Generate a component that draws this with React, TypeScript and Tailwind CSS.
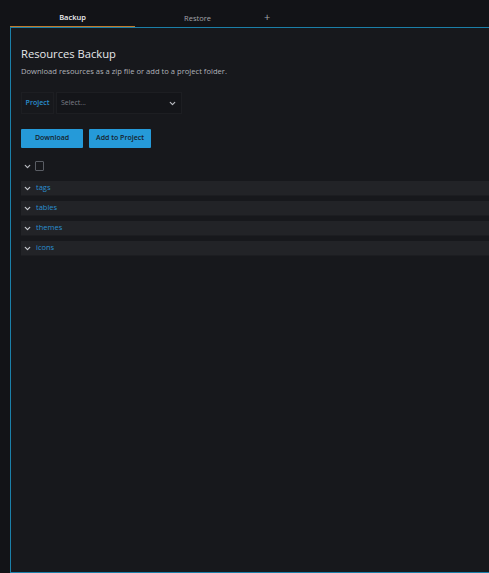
import { ChevronDown } from 'lucide-react'

const GROUPS = ['tags', 'tables', 'themes', 'icons']

function Chevron({ className = '' }: { className?: string }) {
  return <ChevronDown className={`h-[9px] w-[9px] ${className}`} strokeWidth={3.2} />
}

export default function App() {
  return (
    <div
      className="flex h-[573px] w-[489px] flex-col overflow-hidden bg-[#121317] text-[#c8cad0]"
      style={{ fontFamily: '"Open Sans", "Noto Sans", sans-serif' }}
    >
      {/* Tabs */}
      <div className="flex h-[27px] shrink-0 items-end pl-[10px]">
        <div className="flex h-[27px] w-[125px] items-end justify-center border-b border-[#c07a2c] pb-[3px] text-[7.5px] font-semibold text-[#eeeef0]">
          Backup
        </div>
        <div className="flex h-[27px] w-[125px] items-end justify-center pb-[3px] text-[7.5px] font-medium text-[#a2a4aa]">
          Restore
        </div>
        <div className="flex h-[27px] items-end pb-[2px] pl-[4px] text-[11px] text-[#a2a4aa]">+</div>
      </div>

      {/* Panel */}
      <div className="ml-[10px] flex flex-1 flex-col border-t border-b border-l border-[#1b7fa8] bg-[#17181c] pl-[10px] pt-[18px]">
        <h1 className="text-[11.2px] leading-[16px] text-[#e6e7ea]">Resources Backup</h1>
        <p className="mt-[3px] text-[7.6px] leading-[12px] text-[#b0b3b9]">
          Download resources as a zip file or add to a project folder.
        </p>

        <div className="mt-[15px] flex h-[22px] gap-[2px]">
          <div className="flex w-[33px] items-center justify-center border border-[#1d1e22] text-[7px] font-semibold text-[#2a8fd0]">
            Project
          </div>
          <div className="flex w-[126px] items-center justify-between border border-[#1d1e22] bg-[#141519] pl-[4px] pr-[4px] text-[7px] text-[#7c7f88]">
            <span>Select...</span>
            <Chevron className="text-[#b8bac0]" />
          </div>
        </div>

        <div className="mt-[15px] flex gap-[6px]">
          <button className="h-[19px] w-[62px] rounded-[1px] bg-[#259ad9] text-[7px] font-semibold text-[#15212b]">
            Download
          </button>
          <button className="h-[19px] w-[62px] rounded-[1px] bg-[#259ad9] text-[7px] font-semibold text-[#15212b]">
            Add to Project
          </button>
        </div>

        <div className="mt-[13px] flex h-[10px] items-center gap-[3px] pl-[2px]">
          <Chevron className="text-[#b8bac0]" />
          <div className="h-[10px] w-[9px] rounded-[1px] border border-[#5a5d64]" />
        </div>

        <div className="mt-[10px] flex flex-col gap-[5px]">
          {GROUPS.map((g) => (
            <div
              key={g}
              className="flex h-[15px] items-center gap-[4px] border-b border-[#1c1d21] bg-[#222327] pl-[2px] text-[7.5px] text-[#2a8fd0]"
            >
              <Chevron className="text-[#c8cad0]" />
              <span>{g}</span>
            </div>
          ))}
        </div>
      </div>
    </div>
  )
}
